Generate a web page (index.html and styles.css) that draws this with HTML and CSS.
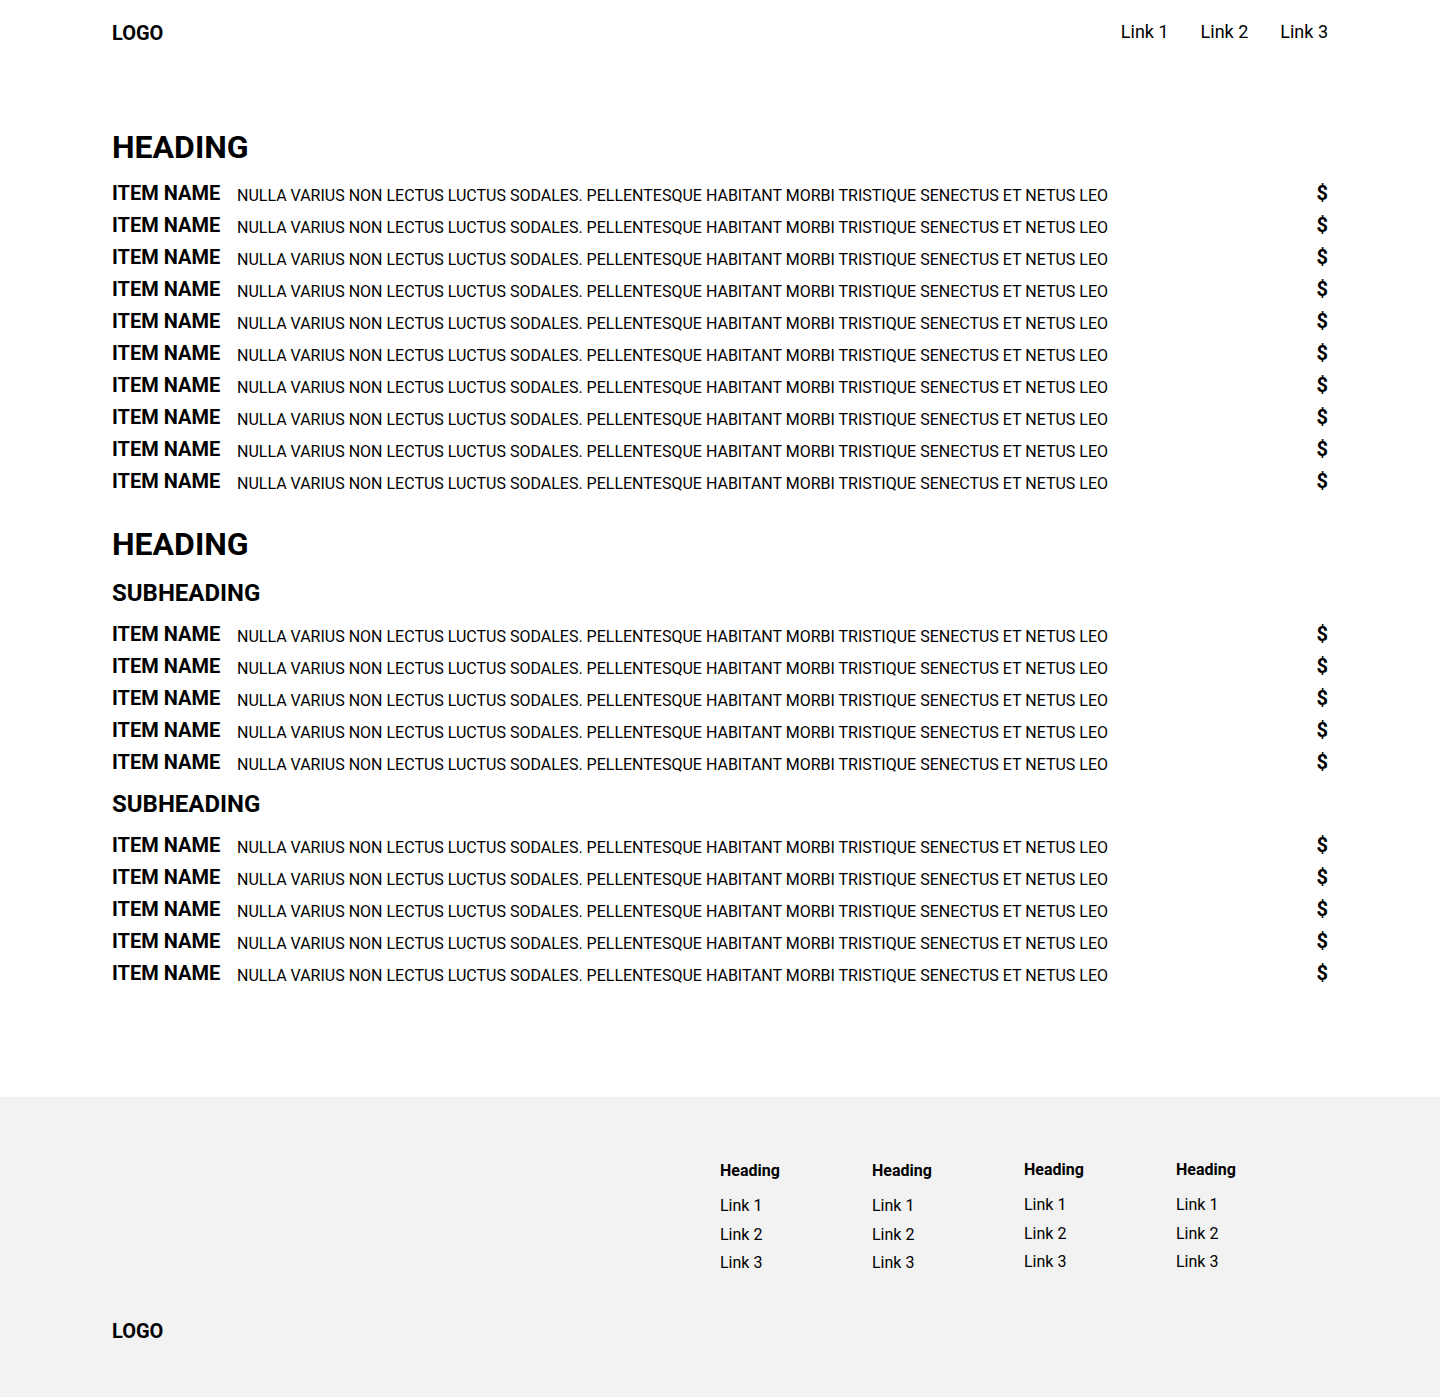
FILE: index.html
```html
<!DOCTYPE html>
<html lang="en">
<head>
<meta charset="utf-8">
<title>Menu</title>
<link rel="stylesheet" href="styles.css">
</head>
<body>
<header class="site-header">
  <div class="logo">LOGO</div>
  <nav class="nav">
    <a href="#">Link 1</a>
    <a href="#">Link 2</a>
    <a href="#">Link 3</a>
  </nav>
</header>

<main class="main">
  <section class="menu-section">
    <h1 class="heading">HEADING</h1>
    <ul class="items">
      <li class="item"><span class="name">ITEM NAME</span><span class="desc">NULLA VARIUS NON LECTUS LUCTUS SODALES. PELLENTESQUE HABITANT MORBI TRISTIQUE SENECTUS ET NETUS LEO</span><span class="price">$</span></li>
      <li class="item"><span class="name">ITEM NAME</span><span class="desc">NULLA VARIUS NON LECTUS LUCTUS SODALES. PELLENTESQUE HABITANT MORBI TRISTIQUE SENECTUS ET NETUS LEO</span><span class="price">$</span></li>
      <li class="item"><span class="name">ITEM NAME</span><span class="desc">NULLA VARIUS NON LECTUS LUCTUS SODALES. PELLENTESQUE HABITANT MORBI TRISTIQUE SENECTUS ET NETUS LEO</span><span class="price">$</span></li>
      <li class="item"><span class="name">ITEM NAME</span><span class="desc">NULLA VARIUS NON LECTUS LUCTUS SODALES. PELLENTESQUE HABITANT MORBI TRISTIQUE SENECTUS ET NETUS LEO</span><span class="price">$</span></li>
      <li class="item"><span class="name">ITEM NAME</span><span class="desc">NULLA VARIUS NON LECTUS LUCTUS SODALES. PELLENTESQUE HABITANT MORBI TRISTIQUE SENECTUS ET NETUS LEO</span><span class="price">$</span></li>
      <li class="item"><span class="name">ITEM NAME</span><span class="desc">NULLA VARIUS NON LECTUS LUCTUS SODALES. PELLENTESQUE HABITANT MORBI TRISTIQUE SENECTUS ET NETUS LEO</span><span class="price">$</span></li>
      <li class="item"><span class="name">ITEM NAME</span><span class="desc">NULLA VARIUS NON LECTUS LUCTUS SODALES. PELLENTESQUE HABITANT MORBI TRISTIQUE SENECTUS ET NETUS LEO</span><span class="price">$</span></li>
      <li class="item"><span class="name">ITEM NAME</span><span class="desc">NULLA VARIUS NON LECTUS LUCTUS SODALES. PELLENTESQUE HABITANT MORBI TRISTIQUE SENECTUS ET NETUS LEO</span><span class="price">$</span></li>
      <li class="item"><span class="name">ITEM NAME</span><span class="desc">NULLA VARIUS NON LECTUS LUCTUS SODALES. PELLENTESQUE HABITANT MORBI TRISTIQUE SENECTUS ET NETUS LEO</span><span class="price">$</span></li>
      <li class="item"><span class="name">ITEM NAME</span><span class="desc">NULLA VARIUS NON LECTUS LUCTUS SODALES. PELLENTESQUE HABITANT MORBI TRISTIQUE SENECTUS ET NETUS LEO</span><span class="price">$</span></li>
    </ul>
  </section>

  <section class="menu-section">
    <h1 class="heading">HEADING</h1>
    <h2 class="subheading">SUBHEADING</h2>
    <ul class="items">
      <li class="item"><span class="name">ITEM NAME</span><span class="desc">NULLA VARIUS NON LECTUS LUCTUS SODALES. PELLENTESQUE HABITANT MORBI TRISTIQUE SENECTUS ET NETUS LEO</span><span class="price">$</span></li>
      <li class="item"><span class="name">ITEM NAME</span><span class="desc">NULLA VARIUS NON LECTUS LUCTUS SODALES. PELLENTESQUE HABITANT MORBI TRISTIQUE SENECTUS ET NETUS LEO</span><span class="price">$</span></li>
      <li class="item"><span class="name">ITEM NAME</span><span class="desc">NULLA VARIUS NON LECTUS LUCTUS SODALES. PELLENTESQUE HABITANT MORBI TRISTIQUE SENECTUS ET NETUS LEO</span><span class="price">$</span></li>
      <li class="item"><span class="name">ITEM NAME</span><span class="desc">NULLA VARIUS NON LECTUS LUCTUS SODALES. PELLENTESQUE HABITANT MORBI TRISTIQUE SENECTUS ET NETUS LEO</span><span class="price">$</span></li>
      <li class="item"><span class="name">ITEM NAME</span><span class="desc">NULLA VARIUS NON LECTUS LUCTUS SODALES. PELLENTESQUE HABITANT MORBI TRISTIQUE SENECTUS ET NETUS LEO</span><span class="price">$</span></li>
    </ul>
    <h2 class="subheading">SUBHEADING</h2>
    <ul class="items">
      <li class="item"><span class="name">ITEM NAME</span><span class="desc">NULLA VARIUS NON LECTUS LUCTUS SODALES. PELLENTESQUE HABITANT MORBI TRISTIQUE SENECTUS ET NETUS LEO</span><span class="price">$</span></li>
      <li class="item"><span class="name">ITEM NAME</span><span class="desc">NULLA VARIUS NON LECTUS LUCTUS SODALES. PELLENTESQUE HABITANT MORBI TRISTIQUE SENECTUS ET NETUS LEO</span><span class="price">$</span></li>
      <li class="item"><span class="name">ITEM NAME</span><span class="desc">NULLA VARIUS NON LECTUS LUCTUS SODALES. PELLENTESQUE HABITANT MORBI TRISTIQUE SENECTUS ET NETUS LEO</span><span class="price">$</span></li>
      <li class="item"><span class="name">ITEM NAME</span><span class="desc">NULLA VARIUS NON LECTUS LUCTUS SODALES. PELLENTESQUE HABITANT MORBI TRISTIQUE SENECTUS ET NETUS LEO</span><span class="price">$</span></li>
      <li class="item"><span class="name">ITEM NAME</span><span class="desc">NULLA VARIUS NON LECTUS LUCTUS SODALES. PELLENTESQUE HABITANT MORBI TRISTIQUE SENECTUS ET NETUS LEO</span><span class="price">$</span></li>
    </ul>
  </section>
</main>

<footer class="site-footer">
  <div class="footer-top">
    <div class="footer-spacer"></div>
    <div class="footer-cols">
      <div class="footer-col">
        <h3 class="footer-heading">Heading</h3>
        <a href="#">Link 1</a>
        <a href="#">Link 2</a>
        <a href="#">Link 3</a>
      </div>
      <div class="footer-col">
        <h3 class="footer-heading">Heading</h3>
        <a href="#">Link 1</a>
        <a href="#">Link 2</a>
        <a href="#">Link 3</a>
      </div>
      <div class="footer-col footer-col-up">
        <h3 class="footer-heading">Heading</h3>
        <a href="#">Link 1</a>
        <a href="#">Link 2</a>
        <a href="#">Link 3</a>
      </div>
      <div class="footer-col footer-col-up">
        <h3 class="footer-heading">Heading</h3>
        <a href="#">Link 1</a>
        <a href="#">Link 2</a>
        <a href="#">Link 3</a>
      </div>
    </div>
  </div>
  <div class="logo footer-logo">LOGO</div>
</footer>
</body>
</html>
```

FILE: styles.css
```css
* {
  box-sizing: border-box;
}

html, body {
  margin: 0;
  padding: 0;
}

body {
  font-family: Roboto, "Liberation Sans", sans-serif;
  color: #000;
  background: #fff;
}

a {
  color: #000;
  text-decoration: none;
}

.site-header {
  display: flex;
  justify-content: space-between;
  align-items: center;
  padding: 20px 112px 0;
  height: 44px;
}

.logo {
  font-weight: 700;
  font-size: 20px;
  line-height: 24px;
  padding-top: 2px;
}

.nav {
  display: flex;
  gap: 32px;
  font-size: 18px;
  line-height: 24px;
}

.main {
  padding: 83px 112px 0;
}

.menu-section + .menu-section {
  margin-top: 27px;
}

.heading {
  margin: 0 0 10px;
  font-size: 32px;
  line-height: 40px;
  font-weight: 700;
}

.subheading {
  margin: 15px 0 11px;
  font-size: 24px;
  line-height: 28px;
  font-weight: 700;
}

.items + .subheading {
  margin-top: 12px;
}

.items {
  list-style: none;
  margin: 0;
  padding: 0;
}

.item {
  display: flex;
  align-items: center;
  height: 32px;
}

.name {
  font-size: 20px;
  font-weight: 700;
  line-height: 24px;
  width: 125px;
  flex-shrink: 0;
}

.desc {
  font-size: 16px;
  line-height: 24px;
  padding-top: 5px;
  flex: 1;
  white-space: nowrap;
}

.price {
  font-size: 20px;
  font-weight: 700;
  line-height: 24px;
}

.site-footer {
  margin-top: 108px;
  background: #f2f2f2;
  padding: 64px 112px 55px;
}

.footer-top {
  display: grid;
  grid-template-columns: 1fr 1fr;
}

.footer-cols {
  display: grid;
  grid-template-columns: repeat(4, 1fr);
}

.footer-col {
  display: flex;
  flex-direction: column;
}

.footer-col-up {
  margin-top: -1px;
}

.footer-heading {
  margin: 0 0 11px;
  font-size: 16px;
  line-height: 20px;
  font-weight: 700;
}

.footer-col a {
  font-size: 16px;
  line-height: 28.5px;
}

.footer-logo {
  margin-top: 41px;
  padding-top: 0;
}
```
